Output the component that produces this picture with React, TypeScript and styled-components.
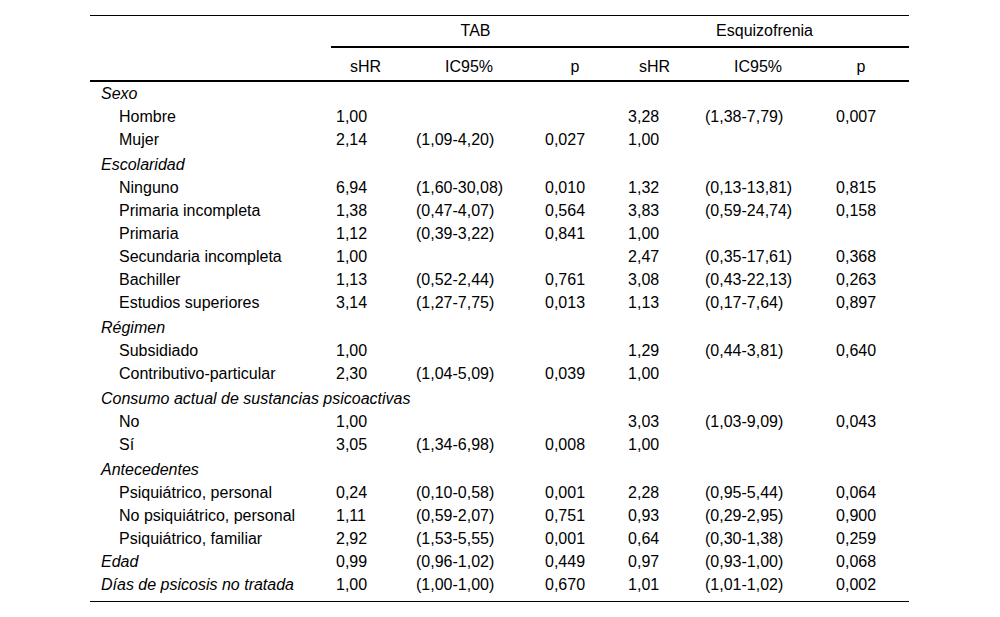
import styled, { createGlobalStyle } from "styled-components";

type Triple = [string, string, string];

interface Row {
    label: string;
    kind: "group" | "item" | "single";
    tab?: Triple;
    esq?: Triple;
}

const rows: Row[] = [
    { label: "Sexo", kind: "group" },
    { label: "Hombre", kind: "item", tab: ["1,00", "", ""], esq: ["3,28", "(1,38-7,79)", "0,007"] },
    { label: "Mujer", kind: "item", tab: ["2,14", "(1,09-4,20)", "0,027"], esq: ["1,00", "", ""] },
    { label: "Escolaridad", kind: "group" },
    { label: "Ninguno", kind: "item", tab: ["6,94", "(1,60-30,08)", "0,010"], esq: ["1,32", "(0,13-13,81)", "0,815"] },
    { label: "Primaria incompleta", kind: "item", tab: ["1,38", "(0,47-4,07)", "0,564"], esq: ["3,83", "(0,59-24,74)", "0,158"] },
    { label: "Primaria", kind: "item", tab: ["1,12", "(0,39-3,22)", "0,841"], esq: ["1,00", "", ""] },
    { label: "Secundaria incompleta", kind: "item", tab: ["1,00", "", ""], esq: ["2,47", "(0,35-17,61)", "0,368"] },
    { label: "Bachiller", kind: "item", tab: ["1,13", "(0,52-2,44)", "0,761"], esq: ["3,08", "(0,43-22,13)", "0,263"] },
    { label: "Estudios superiores", kind: "item", tab: ["3,14", "(1,27-7,75)", "0,013"], esq: ["1,13", "(0,17-7,64)", "0,897"] },
    { label: "Régimen", kind: "group" },
    { label: "Subsidiado", kind: "item", tab: ["1,00", "", ""], esq: ["1,29", "(0,44-3,81)", "0,640"] },
    { label: "Contributivo-particular", kind: "item", tab: ["2,30", "(1,04-5,09)", "0,039"], esq: ["1,00", "", ""] },
    { label: "Consumo actual de sustancias psicoactivas", kind: "group" },
    { label: "No", kind: "item", tab: ["1,00", "", ""], esq: ["3,03", "(1,03-9,09)", "0,043"] },
    { label: "Sí", kind: "item", tab: ["3,05", "(1,34-6,98)", "0,008"], esq: ["1,00", "", ""] },
    { label: "Antecedentes", kind: "group" },
    { label: "Psiquiátrico, personal", kind: "item", tab: ["0,24", "(0,10-0,58)", "0,001"], esq: ["2,28", "(0,95-5,44)", "0,064"] },
    { label: "No psiquiátrico, personal", kind: "item", tab: ["1,11", "(0,59-2,07)", "0,751"], esq: ["0,93", "(0,29-2,95)", "0,900"] },
    { label: "Psiquiátrico, familiar", kind: "item", tab: ["2,92", "(1,53-5,55)", "0,001"], esq: ["0,64", "(0,30-1,38)", "0,259"] },
    { label: "Edad", kind: "single", tab: ["0,99", "(0,96-1,02)", "0,449"], esq: ["0,97", "(0,93-1,00)", "0,068"] },
    { label: "Días de psicosis no tratada", kind: "single", tab: ["1,00", "(1,00-1,00)", "0,670"], esq: ["1,01", "(1,01-1,02)", "0,002"] },
];

// column widths: label, then sHR / IC95% / p for each group
const colWidths = [241, 69, 138, 82, 69, 138, 82];
// padding-left of the values, per column (TAB then Esquizofrenia)
const valuePad = [[5, 16, 7], [8, 16, 9]];
// padding-right of sub-headers so the centre matches
const headPad = [0, 0, 8, 0, 0, 14];

const App = () => {
    return (
        <>
            <GlobalStyle />
            <Page>
                <Table>
                    <colgroup>
                        {colWidths.map((w, i) => <Col key={i} $width={w} />)}
                    </colgroup>
                    <thead>
                        <tr>
                            <EmptyHead rowSpan={2} />
                            <GroupHead colSpan={3}>TAB</GroupHead>
                            <GroupHead colSpan={3}>Esquizofrenia</GroupHead>
                        </tr>
                        <tr>
                            {["sHR", "IC95%", "p", "sHR", "IC95%", "p"].map((h, i) => (
                                <SubHead key={i} $padRight={headPad[i]}>{h}</SubHead>
                            ))}
                        </tr>
                    </thead>
                    <tbody>
                        {rows.map((row, i) => (
                            <BodyRow key={row.label} $spaced={row.kind === "group" && i > 0} $last={i === rows.length - 1}>
                                <Label $indent={row.kind === "item"}>{row.label}</Label>
                                {[row.tab, row.esq].map((set, g) =>
                                    [0, 1, 2].map(c => (
                                        <Value key={`${g}-${c}`} $pad={valuePad[g][c]}>{set ? set[c] : ""}</Value>
                                    ))
                                )}
                            </BodyRow>
                        ))}
                    </tbody>
                </Table>
            </Page>
        </>
    );
};

const GlobalStyle = createGlobalStyle`
  body {
    margin: 0;
    background: #ffffff;
    font-family: "Liberation Sans", Arial, sans-serif;
    color: #000000;
  }
`;

const Page = styled.div`
  padding: 15px 0 0 90px;
`;

const Table = styled.table`
  width: 819px;
  table-layout: fixed;
  border-collapse: collapse;
  border-spacing: 0;
  font-size: 16px;
  border-top: 1px solid #000;
  border-bottom: 1px solid #000;

  td, th {
    padding: 0;
    white-space: nowrap;
    font-weight: 400;
  }
`;

const Col = styled.col<{ $width: number }>`
  width: ${(p) => p.$width}px;
`;

const EmptyHead = styled.th`
  border-bottom: 2px solid #000;
`;

const GroupHead = styled.th`
  text-align: center;
  line-height: 30px;
  height: 30px;
  border-bottom: 2px solid #000;
`;

const SubHead = styled.th<{ $padRight: number }>`
  text-align: center;
  line-height: 23px;
  padding: 7px ${(p) => p.$padRight}px 2px 0 !important;
  border-bottom: 2px solid #000;
`;

const BodyRow = styled.tr<{ $spaced: boolean; $last: boolean }>`
  td {
    line-height: 23px;
    padding-top: ${(p) => (p.$spaced ? "2px" : "0")};
    padding-bottom: ${(p) => (p.$last ? "5px" : "0")};
  }
`;

const Label = styled.td<{ $indent: boolean }>`
  padding-left: ${(p) => (p.$indent ? "29px" : "11px")} !important;
  font-style: ${(p) => (p.$indent ? "normal" : "italic")};
`;

const Value = styled.td<{ $pad: number }>`
  text-align: left;
  padding-left: ${(p) => p.$pad}px !important;
`;

export default App;
